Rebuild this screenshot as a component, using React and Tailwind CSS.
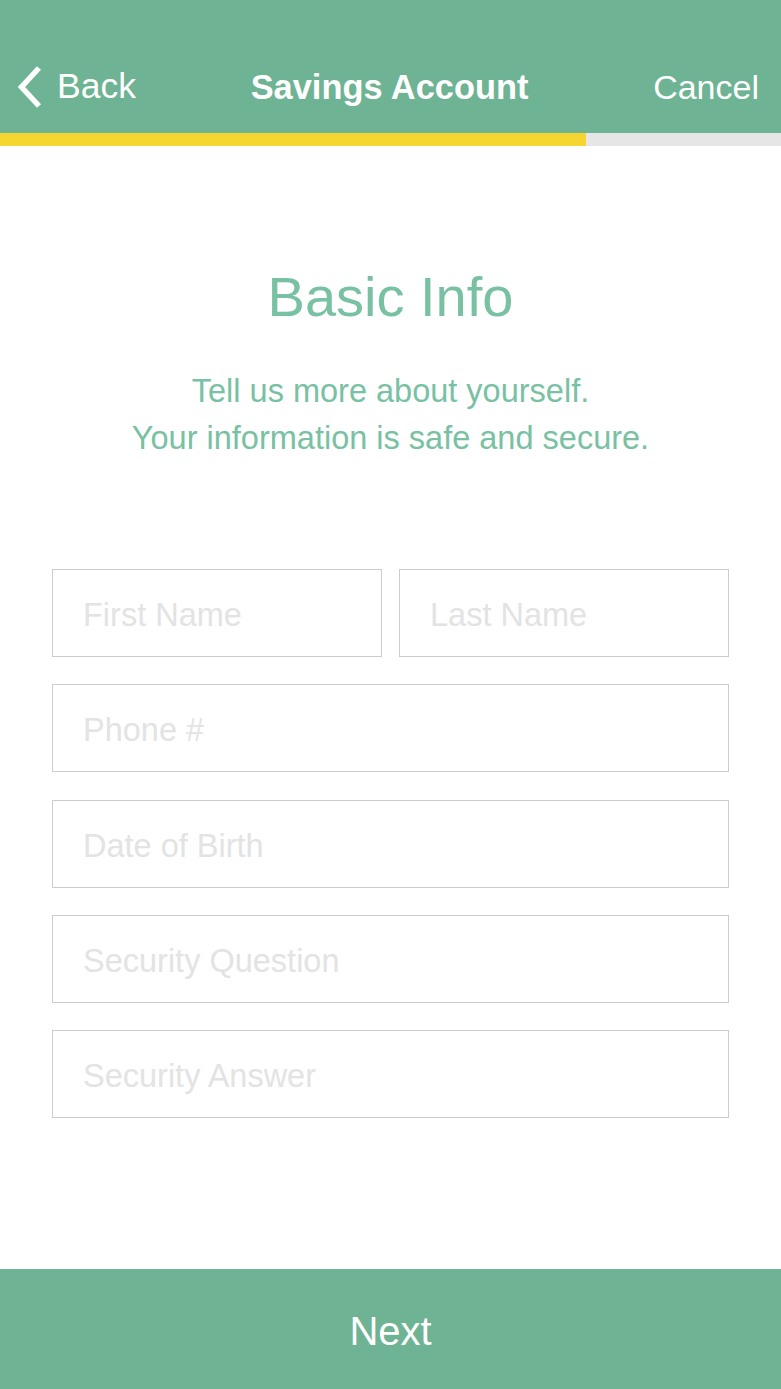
export default function App() {
  const font = { fontFamily: '"Liberation Sans", Arial, sans-serif' };
  const inputCls =
    "h-[88px] w-full border border-[#cccccc] bg-white pl-[30px] pt-[5px] text-[32.5px] text-[#e3e3e3] flex items-center";
  return (
    <div className="flex h-screen w-full flex-col bg-white" style={font}>
      <header className="flex h-[133px] items-end bg-[#6eb393] pb-[24px] text-white">
        <div className="flex w-full items-center justify-between">
          <div className="flex items-center pl-[16px]">
            <svg width="27" height="44" viewBox="0 0 27 44" className="mr-[14px]">
              <path d="M23 3 L5.5 22 L23 41" fill="none" stroke="white" strokeWidth="5.5" />
            </svg>
            <span className="text-[35.5px] leading-none">Back</span>
          </div>
          <span className="mr-[10px] text-[34.4px] font-bold leading-none">Savings Account</span>
          <span className="pr-[22px] text-[34px] leading-none">Cancel</span>
        </div>
      </header>
      <div className="flex h-[13px] w-full">
        <div className="w-[586px] bg-[#f4d531]" />
        <div className="flex-1 bg-[#e6e6e6]" />
      </div>
      <main className="flex flex-1 flex-col items-center">
        <h1 className="mt-[123px] text-[56px] leading-none text-[#78c1a3]">Basic Info</h1>
        <p className="mt-[43px] text-center text-[32.5px] leading-[47px] text-[#78c1a3]">
          Tell us more about yourself.
          <br />
          Your information is safe and secure.
        </p>
        <div className="mt-[107px] flex w-[677px] flex-col gap-[27.25px]">
          <div className="flex gap-[17px]">
            <div className={inputCls}>First Name</div>
            <div className={inputCls}>Last Name</div>
          </div>
          <div className={inputCls}>Phone #</div>
          <div className={inputCls}>Date of Birth</div>
          <div className={inputCls}>Security Question</div>
          <div className={inputCls}>Security Answer</div>
        </div>
      </main>
      <footer className="flex h-[120px] items-center justify-center bg-[#6eb393] pt-[3px] text-[40px] text-white">
        Next
      </footer>
    </div>
  );
}
